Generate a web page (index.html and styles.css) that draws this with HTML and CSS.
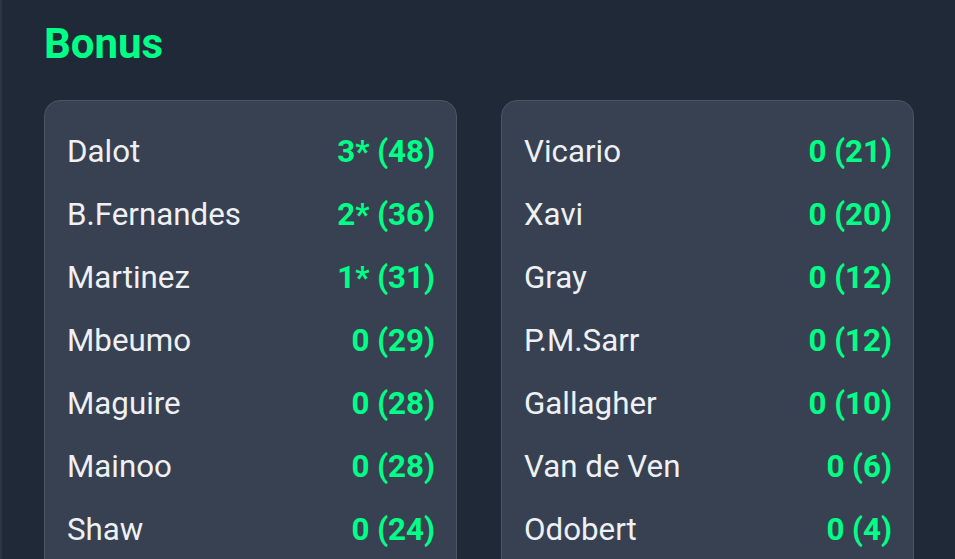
FILE: index.html
```html
<!DOCTYPE html>
<html lang="en">
<head>
    <meta charset="UTF-8">
    <meta name="viewport" content="width=device-width, initial-scale=1.0">
    <title>Bonus</title>
    <link rel="stylesheet" href="styles.css">
</head>
<body>
    <section class="panel">
        <h2 class="panel-title">Bonus</h2>
        <div class="cards">
            <ul class="card">
                <li class="row"><span class="name">Dalot</span><span class="pts">3* (48)</span></li>
                <li class="row"><span class="name">B.Fernandes</span><span class="pts">2* (36)</span></li>
                <li class="row"><span class="name">Martinez</span><span class="pts">1* (31)</span></li>
                <li class="row"><span class="name">Mbeumo</span><span class="pts">0 (29)</span></li>
                <li class="row"><span class="name">Maguire</span><span class="pts">0 (28)</span></li>
                <li class="row"><span class="name">Mainoo</span><span class="pts">0 (28)</span></li>
                <li class="row"><span class="name">Shaw</span><span class="pts">0 (24)</span></li>
            </ul>
            <ul class="card">
                <li class="row"><span class="name">Vicario</span><span class="pts">0 (21)</span></li>
                <li class="row"><span class="name">Xavi</span><span class="pts">0 (20)</span></li>
                <li class="row"><span class="name">Gray</span><span class="pts">0 (12)</span></li>
                <li class="row"><span class="name">P.M.Sarr</span><span class="pts">0 (12)</span></li>
                <li class="row"><span class="name">Gallagher</span><span class="pts">0 (10)</span></li>
                <li class="row"><span class="name">Van de Ven</span><span class="pts">0 (6)</span></li>
                <li class="row"><span class="name">Odobert</span><span class="pts">0 (4)</span></li>
            </ul>
        </div>
    </section>
</body>
</html>
```

FILE: styles.css
```css
html, body {
    margin: 0;
    padding: 0;
    background: #1f2937;
    height: 100%;
    overflow: hidden;
}
body {
    font-family: Roboto, "Liberation Sans", sans-serif;
}
.panel {
    min-height: 100%;
    box-sizing: border-box;
    border-left: 2px solid #2b3546;
    padding: 20px 41px 0 42px;
}
.panel-title {
    margin: 0 0 32px;
    font-size: 42px;
    font-weight: 700;
    line-height: 48px;
    color: #00ff87;
}
.cards {
    display: grid;
    grid-template-columns: 1fr 1fr;
    gap: 44px;
}
.card {
    list-style: none;
    margin: 0;
    padding: 19px 21px 19px 22px;
    background: #374151;
    border: 1px solid #4b5563;
    border-radius: 16px;
}
.row {
    display: flex;
    justify-content: space-between;
    align-items: center;
    height: 63px;
    font-size: 31.3px;
}
.name {
    color: #eef0f3;
}
.pts {
    color: #00ff87;
    font-weight: 700;
}
```
